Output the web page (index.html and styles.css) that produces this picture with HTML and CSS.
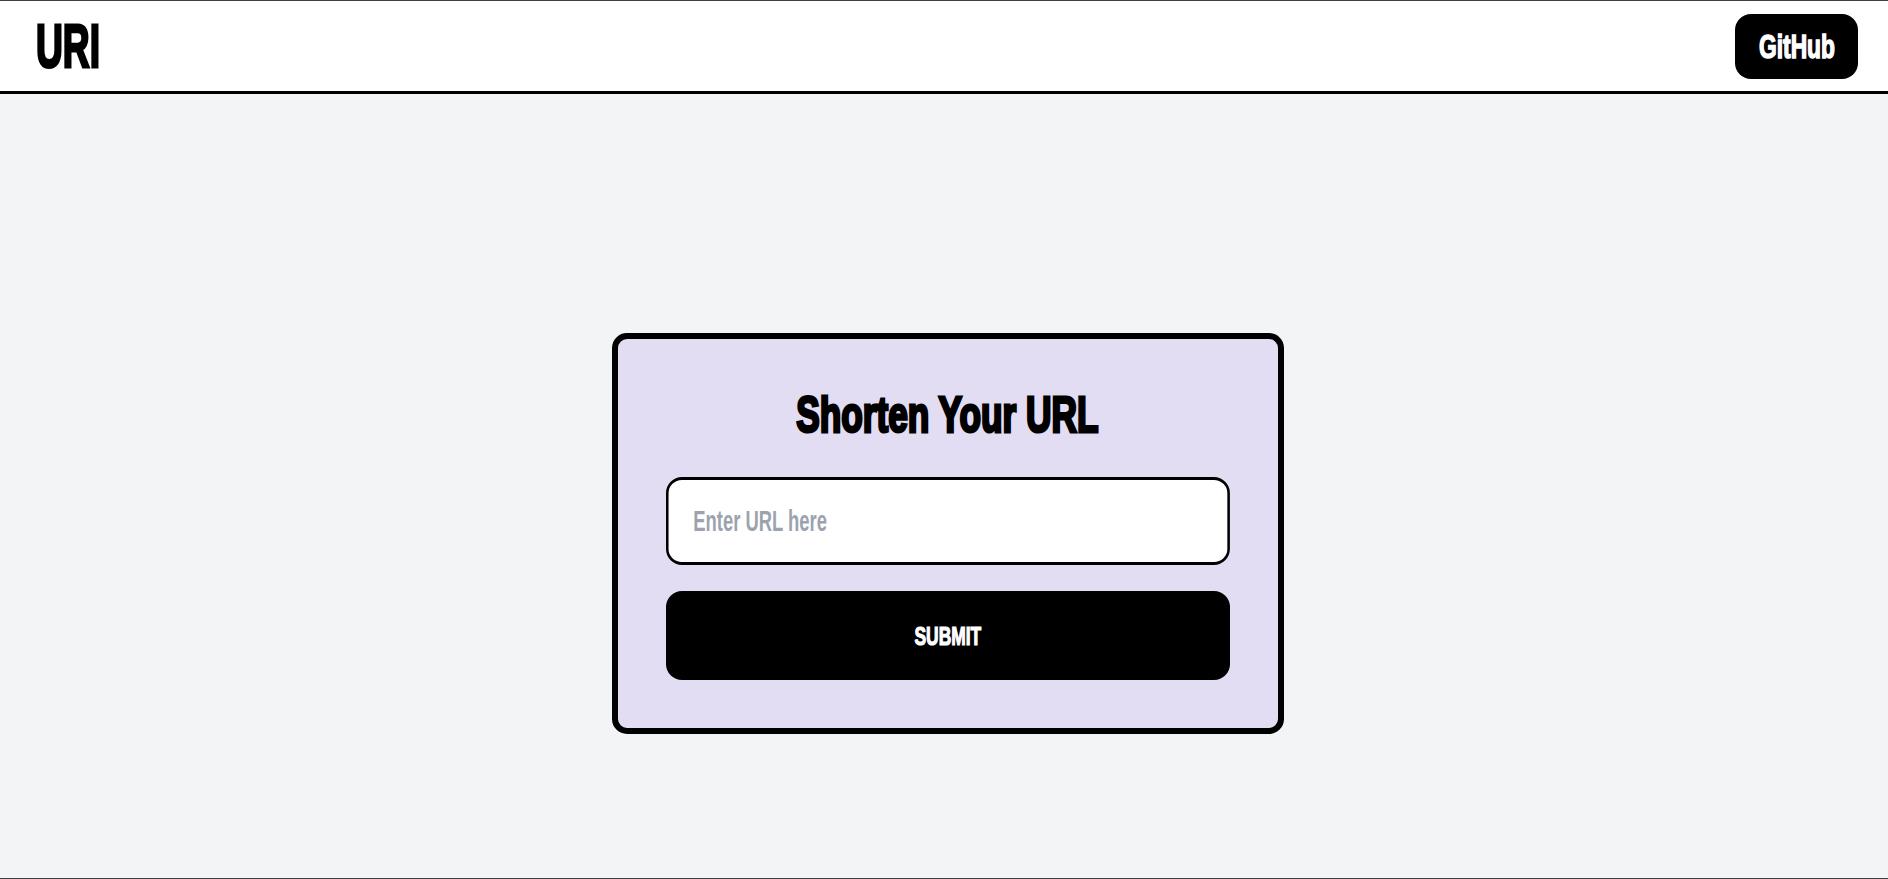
FILE: index.html
```html
<!DOCTYPE html>
<html lang="en">
<head>
<meta charset="utf-8">
<title>URI - Shorten Your URL</title>
<link rel="stylesheet" href="styles.css">
</head>
<body>
<div class="frame" aria-hidden="true"></div>
<header class="topbar">
  <a class="logo" href="#"><span class="squeeze squeeze-logo">URI</span></a>
  <a class="github-btn" href="#"><span class="squeeze squeeze-btn">GitHub</span></a>
</header>
<main class="main">
  <form class="card" onsubmit="return false;">
    <h1 class="card-title"><span class="squeeze squeeze-title">Shorten Your URL</span></h1>
    <div class="input-wrap">
      <input class="url-input" type="text" placeholder="Enter URL here">
    </div>
    <button class="submit-btn" type="submit"><span class="squeeze squeeze-submit">SUBMIT</span></button>
  </form>
</main>
</body>
</html>
```
FILE: styles.css
```css
* {
  box-sizing: border-box;
}

html,
body {
  margin: 0;
  padding: 0;
}

body {
  background: #f3f4f6;
  font-family: "Liberation Sans", Arial, sans-serif;
  font-weight: 700;
  color: #000;
}

.frame {
  position: fixed;
  inset: 0;
  border-top: 1px solid #3f3f3f;
  border-bottom: 1px solid #3f3f3f;
  pointer-events: none;
  z-index: 10;
}

/* emulate a tall, heavy condensed display face */
.squeeze {
  display: inline-block;
  white-space: nowrap;
  -webkit-text-stroke: 1px currentColor;
}

.topbar {
  height: 94px;
  background: #fff;
  border-bottom: 3px solid #000;
  display: flex;
  align-items: center;
  justify-content: space-between;
  padding: 1px 30px 0 36px;
}

.logo {
  color: #000;
  text-decoration: none;
  font-size: 62px;
  line-height: 62px;
  display: block;
  width: 60px;
}

.squeeze-logo {
  transform: scaleX(0.6);
  transform-origin: left center;
  -webkit-text-stroke-width: 3px;
}

.github-btn {
  width: 123px;
  height: 65px;
  border-radius: 16px;
  background: #000;
  color: #fff;
  text-decoration: none;
  display: flex;
  align-items: center;
  justify-content: center;
  font-size: 33px;
  line-height: 33px;
}

.squeeze-btn {
  transform: scaleX(0.69);
  -webkit-text-stroke-width: 1.5px;
}

.main {
  height: 100vh;
  display: flex;
  align-items: center;
  justify-content: center;
  padding-left: 7px;
}

.card {
  width: 672px;
  background: #e2ddf3;
  border: 6px solid #000;
  border-radius: 15px;
  padding: 48px 48px 48px;
  display: flex;
  flex-direction: column;
}

.card-title {
  margin: 1px 0 35px;
  font-size: 50px;
  line-height: 54px;
  font-weight: 700;
  text-align: center;
  white-space: nowrap;
}

.squeeze-title {
  transform: scaleX(0.705);
  -webkit-text-stroke-width: 3px;
}

.input-wrap {
  height: 88px;
  width: 100%;
}

.url-input {
  display: block;
  height: 88px;
  width: 888px;
  transform: scaleX(0.635);
  transform-origin: left center;
  border-style: solid;
  border-color: #000;
  border-width: 3px 4.72px;
  border-radius: 25.2px / 16px;
  background: #fff;
  padding: 0 20px 0 39px;
  font-family: inherit;
  font-weight: 700;
  font-size: 29px;
  color: #000;
  outline: none;
}

.url-input::placeholder {
  color: #9ca3af;
}

.submit-btn {
  margin-top: 26px;
  height: 89px;
  width: 100%;
  border: 0;
  border-radius: 16px;
  background: #000;
  color: #fff;
  font-family: inherit;
  font-weight: 700;
  font-size: 26px;
  line-height: 26px;
  cursor: pointer;
  display: flex;
  align-items: center;
  justify-content: center;
}

.squeeze-submit {
  transform: scaleX(0.67);
  -webkit-text-stroke-width: 1.2px;
}
```
